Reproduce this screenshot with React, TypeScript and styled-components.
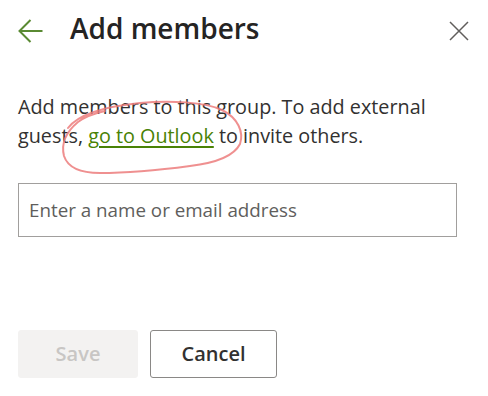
import React from "react";
import styled, { createGlobalStyle } from "styled-components";

const Global = createGlobalStyle`
  html, body { margin: 0; padding: 0; background: #ffffff; }
  body { font-family: "Open Sans", "Noto Sans", sans-serif; color: #323130; }
`;

const Panel = styled.div`
  width: 488px;
  height: 396px;
  box-sizing: border-box;
  padding: 0 19px 0 18px;
  display: flex;
  flex-direction: column;
  position: relative;
  overflow: hidden;
`;

const Header = styled.div`
  height: 62px;
  display: flex;
  align-items: center;
`;

const IconButton = styled.button`
  border: 0;
  background: transparent;
  padding: 0;
  margin: 0;
  display: flex;
  align-items: center;
  justify-content: center;
  cursor: pointer;
`;

const Title = styled.h1`
  flex: 1;
  margin: 0 0 6px 26px;
  font-size: 28px;
  font-weight: 600;
  color: #252423;
  line-height: 36px;
`;

const Description = styled.p`
  margin: 30px 14px 0 0;
  font-size: 19.8px;
  line-height: 29px;
  color: #323130;
  position: relative;
`;

const Link = styled.a`
  color: #498205;
  text-decoration: underline;
  text-decoration-thickness: 2px;
  text-underline-offset: 3px;
`;

const Scribble = styled.svg`
  position: absolute;
  left: 0;
  top: 0;
  pointer-events: none;
`;

const Input = styled.input`
  margin: 33px 12px 0 0;
  height: 54px;
  box-sizing: border-box;
  border: 1px solid #a19f9d;
  border-radius: 0;
  padding: 0 10px;
  font-family: inherit;
  font-size: 18.8px;
  color: #323130;
  outline: none;
  &::placeholder { color: #605e5c; }
`;

const Actions = styled.div`
  margin-top: 93px;
  display: flex;
  gap: 12px;
`;

const Button = styled.button<{ $primary?: boolean }>`
  height: 48px;
  box-sizing: border-box;
  width: ${(p) => (p.$primary ? "120px" : "127px")};
  border-radius: 3px;
  font-family: inherit;
  font-size: 20px;
  font-weight: 600;
  border: 1px solid ${(p) => (p.$primary ? "#f3f2f1" : "#8a8886")};
  background: ${(p) => (p.$primary ? "#f3f2f1" : "#ffffff")};
  color: ${(p) => (p.$primary ? "#c8c6c4" : "#323130")};
  padding: 0 0 2px;
`;

export default function App() {
  return (
    <>
      <Global />
      <Panel>
        <Header>
          <IconButton aria-label="Back">
            <svg width="26" height="26" viewBox="0 0 26 26">
              <path d="M1.5 13 H24.5 M12.5 2 L1.5 13 L12.5 24" fill="none" stroke="#5a8a33" strokeWidth="2" />
            </svg>
          </IconButton>
          <Title>Add members</Title>
          <IconButton aria-label="Close">
            <svg width="20" height="20" viewBox="0 0 20 20">
              <path d="M1 1 L19 19 M19 1 L1 19" fill="none" stroke="#605e5c" strokeWidth="1.5" />
            </svg>
          </IconButton>
        </Header>
        <Description>
          Add members to this group. To add external guests, <Link href="#">go to Outlook</Link> to invite others.
        </Description>
        <Input placeholder="Enter a name or email address" />
        <Actions>
          <Button $primary disabled>Save</Button>
          <Button>Cancel</Button>
        </Actions>
        <Scribble width="488" height="396" viewBox="0 0 488 396">
          <path
            d="M68 128 C 80 112, 110 106, 140 103 C 170 100, 205 102, 222 110 C 238 118, 244 132, 240 144 C 234 156, 215 163, 190 166 C 160 170, 125 173, 100 173 C 82 173, 68 168, 64 156 C 61 144, 66 132, 78 122 C 86 116, 96 113, 105 111"
            fill="none"
            stroke="#ec7c7c"
            strokeOpacity="0.85"
            strokeWidth="2"
            strokeLinecap="round"
          />
        </Scribble>
      </Panel>
    </>
  );
}
